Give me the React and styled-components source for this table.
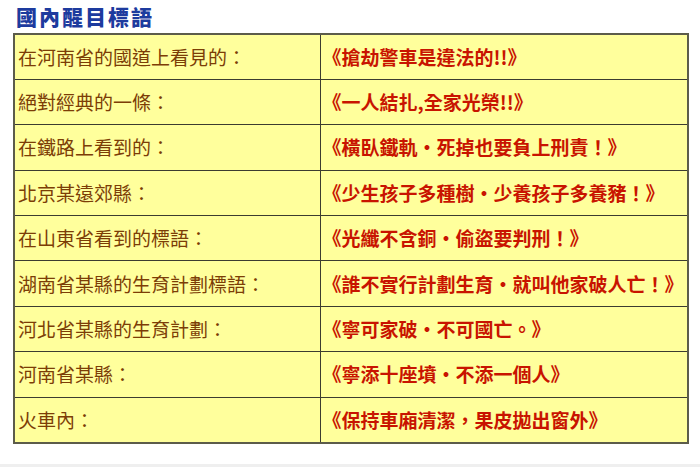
import React from "react";
import styled, { createGlobalStyle } from "styled-components";

const Global = createGlobalStyle`
  html, body { margin: 0; padding: 0; background: #ffffff; }
  body { font-family: "Noto Sans CJK TC", "Noto Sans", sans-serif; }
`;

const Page = styled.div`
  width: 700px;
  height: 467px;
  display: flex;
  flex-direction: column;
  box-sizing: border-box;
  padding: 0 13px 0 13px;
  position: relative;
`;

const Title = styled.h1`
  margin: 0;
  padding: 4px 0 0 3px;
  height: 33px;
  box-sizing: border-box;
  font-size: 21px;
  line-height: 25px;
  font-weight: 900;
  color: #1d3b9e;
  letter-spacing: 2px;
`;

const Table = styled.table`
  width: 674px;
  table-layout: fixed;
  border-collapse: collapse;
  background: #ffff9c;
  border: 2px solid #5c5c4a;
`;

const Col = styled.col`
  width: ${(p) => p.$w}px;
`;

const Row = styled.tr`
  height: 45.4px;
`;

const Cell = styled.td`
  border: 1px solid #3c3c30;
  padding: 0 0 0 ${(p) => (p.$slogan ? "2px" : "3px")};
  font-size: 19px;
  line-height: 24px;
  white-space: nowrap;
  overflow: visible;
  color: ${(p) => (p.$slogan ? "#c81400" : "#7c3d06")};
  font-weight: ${(p) => (p.$slogan ? 700 : 400)};
  vertical-align: middle;
`;

const BottomStrip = styled.div`
  position: absolute;
  left: 0;
  right: 0;
  bottom: 0;
  height: 3px;
  background: #efefef;
`;

const rows = [
  ["在河南省的國道上看見的：", "《搶劫警車是違法的!!》"],
  ["絕對經典的一條：", "《一人結扎,全家光榮!!》"],
  ["在鐵路上看到的：", "《橫臥鐵軌・死掉也要負上刑責！》"],
  ["北京某遠郊縣：", "《少生孩子多種樹・少養孩子多養豬！》"],
  ["在山東省看到的標語：", "《光纖不含銅・偷盜要判刑！》"],
  ["湖南省某縣的生育計劃標語：", "《誰不實行計劃生育・就叫他家破人亡！》"],
  ["河北省某縣的生育計劃：", "《寧可家破・不可國亡。》"],
  ["河南省某縣：", "《寧添十座墳・不添一個人》"],
  ["火車內：", "《保持車廂清潔，果皮拋出窗外》"],
];

export default function App() {
  return (
    <>
      <Global />
      <Page>
        <Title>國內醒目標語</Title>
        <Table>
          <colgroup>
            <Col $w={306} />
            <Col $w={368} />
          </colgroup>
          <tbody>
            {rows.map(([place, slogan]) => (
              <Row key={place}>
                <Cell>{place}</Cell>
                <Cell $slogan>{slogan}</Cell>
              </Row>
            ))}
          </tbody>
        </Table>
        <BottomStrip />
      </Page>
    </>
  );
}
